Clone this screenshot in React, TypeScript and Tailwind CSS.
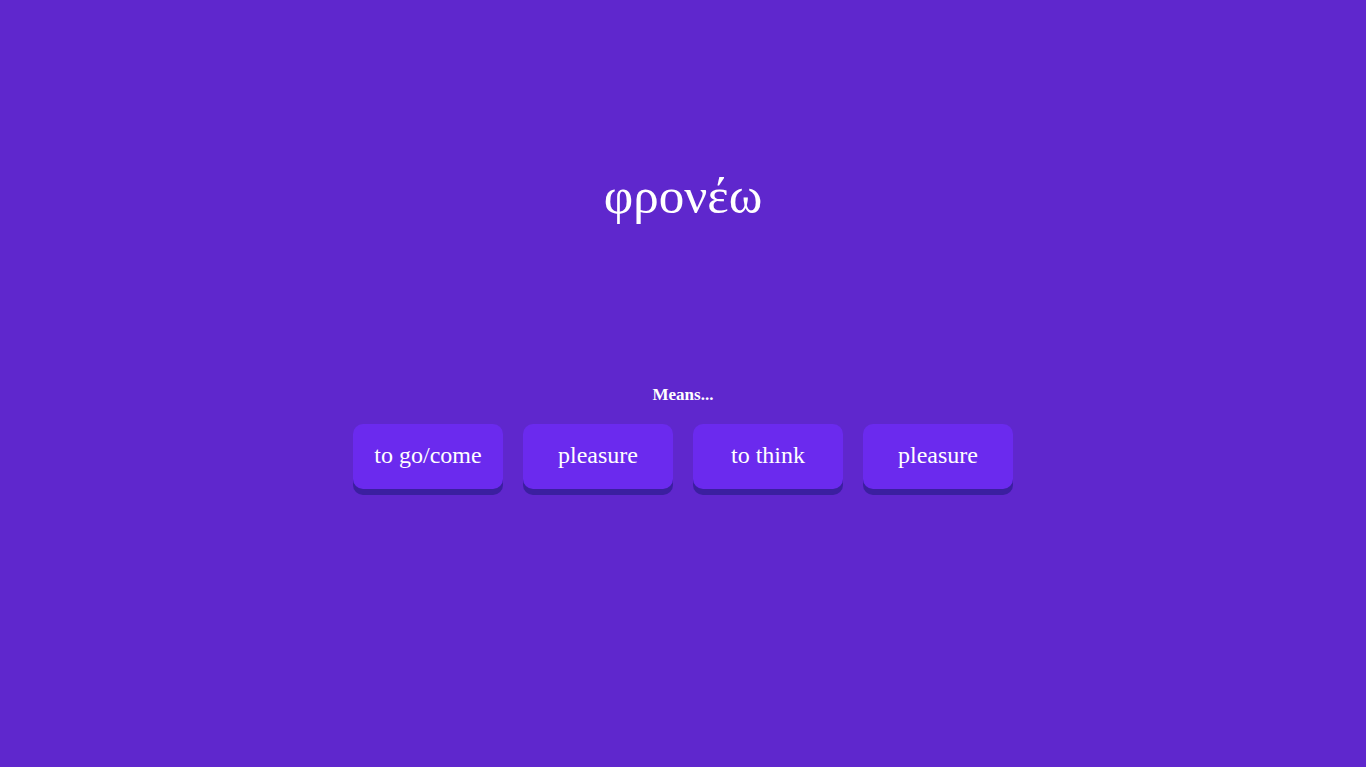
const options = ["to go/come", "pleasure", "to think", "pleasure"];

export default function App() {
  return (
    <div
      className="flex min-h-screen flex-col items-center bg-[#5f27cd] text-white"
      style={{ fontFamily: '"Liberation Serif", "DejaVu Serif", serif' }}
    >
      <h1 className="mt-[166px] text-[51px] leading-[60px] font-normal">φρονέω</h1>

      <p className="mt-[159px] text-[17px] leading-[20px] font-bold">Means...</p>

      <div className="mt-[19px] flex gap-5">
        {options.map((opt, i) => (
          <button
            key={i}
            className="h-[65px] w-[150px] rounded-[10px] bg-[#6b2aee] pb-[3px] text-[24px] text-white shadow-[0_6px_0_#3b1fa0]"
            style={{ fontFamily: '"Liberation Serif", "DejaVu Serif", serif' }}
          >
            {opt}
          </button>
        ))}
      </div>
    </div>
  );
}
